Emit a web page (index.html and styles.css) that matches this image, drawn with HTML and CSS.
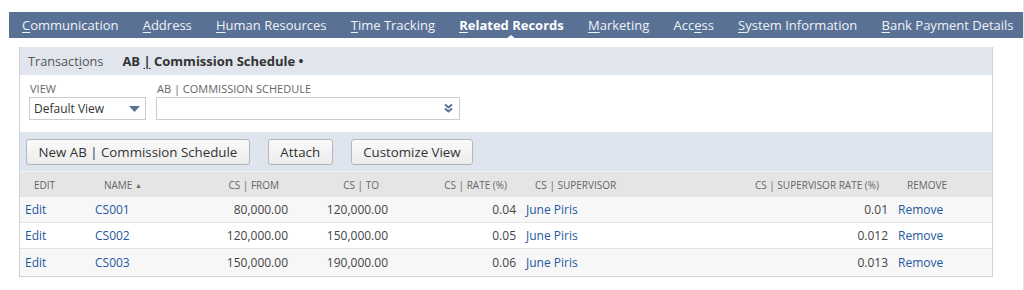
FILE: index.html
```html
<!DOCTYPE html>
<html lang="en">
<head>
  <meta charset="UTF-8" />
  <title>Related Records</title>
  <link rel="stylesheet" href="styles.css">
</head>
<body>

  <!-- Main tabs -->
  <nav class="tabs">
    <a><u>C</u>ommunication</a>
    <a><u>A</u>ddress</a>
    <a><u>H</u>uman Resources</a>
    <a><u>T</u>ime Tracking</a>
    <a class="active"><u>R</u>elated Records</a>
    <a><u>M</u>arketing</a>
    <a>Acc<u>e</u>ss</a>
    <a><u>S</u>ystem Information</a>
    <a><u>B</u>ank Payment Details</a>
  </nav>

  <section class="panel">
    <!-- Sub tabs -->
    <div class="subtabs">
      <a>Transact<u>i</u>ons</a>
      <a class="active">AB <u>|</u> Commission Schedule •</a>
    </div>

    <!-- Filters -->
    <div class="filters">
      <div class="field">
        <label>View</label>
        <div class="select">
          <span>Default View</span>
          <svg width="11" height="6" viewBox="0 0 11 6"><path d="M0 0 H11 L5.5 6 Z" fill="#5b7196"/></svg>
        </div>
      </div>
      <div class="field">
        <label>AB | Commission Schedule</label>
        <div class="lookup">
          <svg width="9" height="9" viewBox="0 0 9 9"><path d="M1 0.5 L4.5 3.5 L8 0.5 M1 4.5 L4.5 7.5 L8 4.5" stroke="#5b7196" stroke-width="2" fill="none"/></svg>
        </div>
      </div>
    </div>

    <!-- Buttons -->
    <div class="actions">
      <button>New AB | Commission Schedule</button>
      <button>Attach</button>
      <button>Customize View</button>
    </div>

    <!-- List -->
    <table class="list">
      <colgroup>
        <col style="width:70px"><col style="width:100px"><col style="width:103px"><col style="width:100px">
        <col style="width:128px"><col style="width:200px"><col style="width:172px"><col style="width:99px">
      </colgroup>
      <thead>
        <tr>
          <th>Edit</th>
          <th>Name <span class="sort">▲</span></th>
          <th class="num">CS | From</th>
          <th class="num">CS | To</th>
          <th class="num">CS | Rate (%)</th>
          <th>CS | Supervisor</th>
          <th class="num">CS | Supervisor Rate (%)</th>
          <th>Remove</th>
        </tr>
      </thead>
      <tbody>
        <tr>
          <td><a>Edit</a></td><td><a>CS001</a></td>
          <td class="num">80,000.00</td><td class="num">120,000.00</td><td class="num">0.04</td>
          <td><a>June Piris</a></td><td class="num">0.01</td><td><a>Remove</a></td>
        </tr>
        <tr>
          <td><a>Edit</a></td><td><a>CS002</a></td>
          <td class="num">120,000.00</td><td class="num">150,000.00</td><td class="num">0.05</td>
          <td><a>June Piris</a></td><td class="num">0.012</td><td><a>Remove</a></td>
        </tr>
        <tr>
          <td><a>Edit</a></td><td><a>CS003</a></td>
          <td class="num">150,000.00</td><td class="num">190,000.00</td><td class="num">0.06</td>
          <td><a>June Piris</a></td><td class="num">0.013</td><td><a>Remove</a></td>
        </tr>
      </tbody>
    </table>
  </section>

</body>
</html>
```

FILE: styles.css
```css
body {
  margin: 0;
  font-family: 'Open Sans', 'Liberation Sans', sans-serif;
  color: #333;
  background: #fff;
  border-right: 1px solid #e4e4e4;
  height: 290px;
  box-sizing: border-box;
}

u {
  text-decoration: underline;
  text-underline-offset: 2px;
}

/* main tabs */
.tabs {
  margin: 12px 0 0 9px;
  height: 26px;
  background: #5a7196;
  display: flex;
  align-items: center;
  gap: 24.2px;
  padding-left: 13px;
  font-size: 13px;
}

.tabs a {
  color: #eef1f6;
  position: relative;
  white-space: nowrap;
}

.tabs a.active {
  color: #fff;
  font-weight: 700;
}

.tabs a.active::after {
  content: "";
  position: absolute;
  left: 50%;
  bottom: -6px;
  margin-left: -6px;
  border: 6px solid transparent;
  border-bottom: 5px solid #fff;
  border-top: 0;
}

/* panel */
.panel {
  margin: 9px 0 0 19px;
  width: 972px;
  border: 1px solid #d3d3d3;
  border-top: 0;
}

.subtabs {
  height: 28px;
  background: #e0e5ee;
  display: flex;
  align-items: center;
  gap: 19px;
  padding-left: 8px;
  font-size: 12.7px;
}

.subtabs a {
  color: #555;
  position: relative;
}

.subtabs a.active {
  color: #333;
  font-weight: 700;
  font-size: 13px;
}

.subtabs a.active::after {
  content: "";
  position: absolute;
  left: 50%;
  bottom: -8px;
  margin-left: -5px;
  border: 5px solid transparent;
  border-bottom: 4px solid #fff;
  border-top: 0;
}

.filters {
  display: flex;
  gap: 10px;
  padding: 6px 0 12px 9px;
}

.field label {
  display: block;
  font-size: 11px;
  text-transform: uppercase;
  color: #666;
  line-height: 15px;
  margin: 0 0 1px 1px;
}

.select,
.lookup {
  height: 23px;
  box-sizing: border-box;
  border: 1px solid #ccc;
  background: #fff;
  display: flex;
  align-items: center;
  justify-content: space-between;
}

.select {
  width: 117px;
  padding: 0 5px 0 4px;
  font-size: 12px;
  color: #333;
}

.lookup {
  width: 304px;
  justify-content: flex-end;
  padding-right: 6px;
}

.actions {
  background: #dfe5ee;
  height: 39px;
  display: flex;
  align-items: center;
  gap: 18px;
  padding-left: 6px;
}

button {
  font-family: inherit;
  font-size: 13.3px;
  color: #333;
  height: 26px;
  padding: 0 11.5px;
  border: 1px solid #b6b6b6;
  border-radius: 3px;
  background: linear-gradient(#fafafa, #ececec);
}

/* list */
.list {
  width: 972px;
  table-layout: fixed;
  border-collapse: collapse;
  font-size: 12px;
}

.list th {
  height: 25px;
  background: #e5e5e5;
  border-top: 1px solid #f2f2f2;
  font-size: 10px;
  font-weight: 400;
  text-transform: uppercase;
  color: #666;
  text-align: left;
  padding: 0 14px;
  white-space: nowrap;
}

.list .sort {
  font-size: 7px;
  vertical-align: 1px;
}

.list td {
  height: 25px;
  padding: 0 5px;
  border-bottom: 1px solid #e4e4e4;
  color: #444;
  white-space: nowrap;
}

.list tbody tr:nth-child(odd) td {
  background: #f7f7f7;
}

.list tbody tr:last-child td {
  height: 27px;
  border-bottom: 0;
}

.list .num {
  text-align: right;
}

.list a {
  color: #24589e;
}
```
